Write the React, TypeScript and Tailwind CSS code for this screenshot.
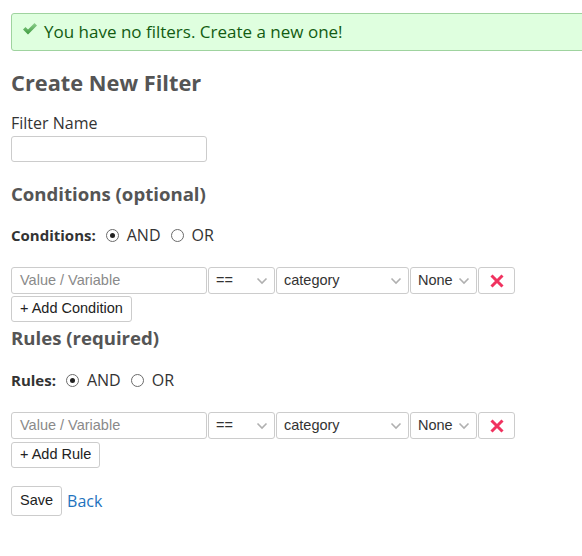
import React from 'react';

const sans = { fontFamily: '"Open Sans", "Liberation Sans", sans-serif' };
const arial = { fontFamily: '"Liberation Sans", Arial, sans-serif' };

function Chevron() {
  return (
    <svg width="12" height="8" viewBox="0 0 12 8" className="shrink-0">
      <path d="M1.5 1.5 L6 6 L10.5 1.5" fill="none" stroke="#b0b0b0" strokeWidth="1.6" />
    </svg>
  );
}

function Radio({ checked, label }: { checked?: boolean; label: string }) {
  return (
    <span className="flex items-center gap-[8px]">
      <span className="flex h-[13px] w-[13px] items-center justify-center rounded-full border border-[#6b6b6b] bg-white">
        {checked && <span className="h-[5px] w-[5px] rounded-full bg-[#222]" />}
      </span>
      <span className="text-[16px] text-[#333]">{label}</span>
    </span>
  );
}

function Select({ width, value }: { width: string; value: string }) {
  return (
    <div className={`${width} flex h-full items-center justify-between rounded-[3px] border border-[#ccc] bg-white pl-[7px] pr-[6px] text-[14.5px] text-[#333]`}>
      <span>{value}</span>
      <Chevron />
    </div>
  );
}

function FilterRow() {
  return (
    <div className="flex h-[27px] gap-[1px]" style={arial}>
      <div className="flex h-full w-[196px] items-center rounded-[3px] border border-[#ccc] bg-white px-[8px] text-[14.5px] text-[#8a8a8a]">
        Value / Variable
      </div>
      <Select width="w-[67px]" value="==" />
      <Select width="w-[133px]" value="category" />
      <Select width="w-[67px]" value="None" />
      <div className="flex h-full w-[37px] items-center justify-center rounded-[3px] border border-[#ccc] bg-white">
        <svg width="16" height="16" viewBox="0 0 16 16">
          <path d="M2.5 2.5 L13.5 13.5 M13.5 2.5 L2.5 13.5" stroke="#f0325f" strokeWidth="3" strokeLinecap="butt" />
        </svg>
      </div>
    </div>
  );
}

function PlainButton({ children, className = '' }: { children: React.ReactNode; className?: string }) {
  return (
    <button
      className={`flex items-center rounded-[3px] border border-[#ccc] bg-white px-[8px] text-[14.5px] text-[#222] ${className}`}
      style={arial}
    >
      {children}
    </button>
  );
}

export default function App() {
  return (
    <div className="h-[556px] w-[582px] overflow-hidden bg-white pl-[11px] pt-[13px]" style={sans}>
      {/* Notice */}
      <div className="flex h-[38px] w-[600px] items-center gap-[6px] rounded-[3px] border border-[#9fd39f] bg-[#dfffdf] pl-[10px] text-[17px] text-[#125c12]">
        <svg width="16" height="14" viewBox="0 0 16 14" className="-mt-[6px]">
          <defs>
            <linearGradient id="chk" x1="0" y1="0" x2="0" y2="1">
              <stop offset="0" stopColor="#8fd08f" />
              <stop offset="1" stopColor="#3d9a3d" />
            </linearGradient>
          </defs>
          <path d="M1 7.5 L3.5 5 L6 7.5 L12.5 1 L15 3.5 L6 12.5 Z" fill="url(#chk)" />
        </svg>
        <span>You have no filters. Create a new one!</span>
      </div>

      <h2 className="mt-[17px] text-[21.8px] font-bold leading-[30px] text-[#555]">Create New Filter</h2>

      <label className="mt-[15px] block text-[16px] leading-[20px] text-[#333]">Filter Name</label>
      <div className="mt-[3px] h-[26px] w-[196px] rounded-[3px] border border-[#ccc] bg-white" />

      <h3 className="mt-[18px] text-[18.6px] font-bold leading-[28px] text-[#555]">Conditions (optional)</h3>

      <div className="mt-[15px] flex h-[24px] items-center gap-[10px]">
        <span className="text-[15px] font-bold text-[#333]">Conditions:</span>
        <Radio checked label="AND" />
        <Radio label="OR" />
      </div>

      <div className="mt-[20px]">
        <FilterRow />
      </div>
      <PlainButton className="mt-[2px] h-[26px]">+ Add Condition</PlainButton>

      <h3 className="mt-[2px] text-[18.6px] font-bold leading-[28px] text-[#555]">Rules (required)</h3>

      <div className="mt-[16px] flex h-[24px] items-center gap-[10px]">
        <span className="text-[15px] font-bold text-[#333]">Rules:</span>
        <Radio checked label="AND" />
        <Radio label="OR" />
      </div>

      <div className="mt-[20px]">
        <FilterRow />
      </div>
      <PlainButton className="mt-[3px] h-[26px]">+ Add Rule</PlainButton>

      <div className="mt-[18px] flex items-center gap-[5px]">
        <PlainButton className="h-[30px]">Save</PlainButton>
        <a href="#" className="text-[16px] text-[#1e73be]">Back</a>
      </div>
    </div>
  );
}
